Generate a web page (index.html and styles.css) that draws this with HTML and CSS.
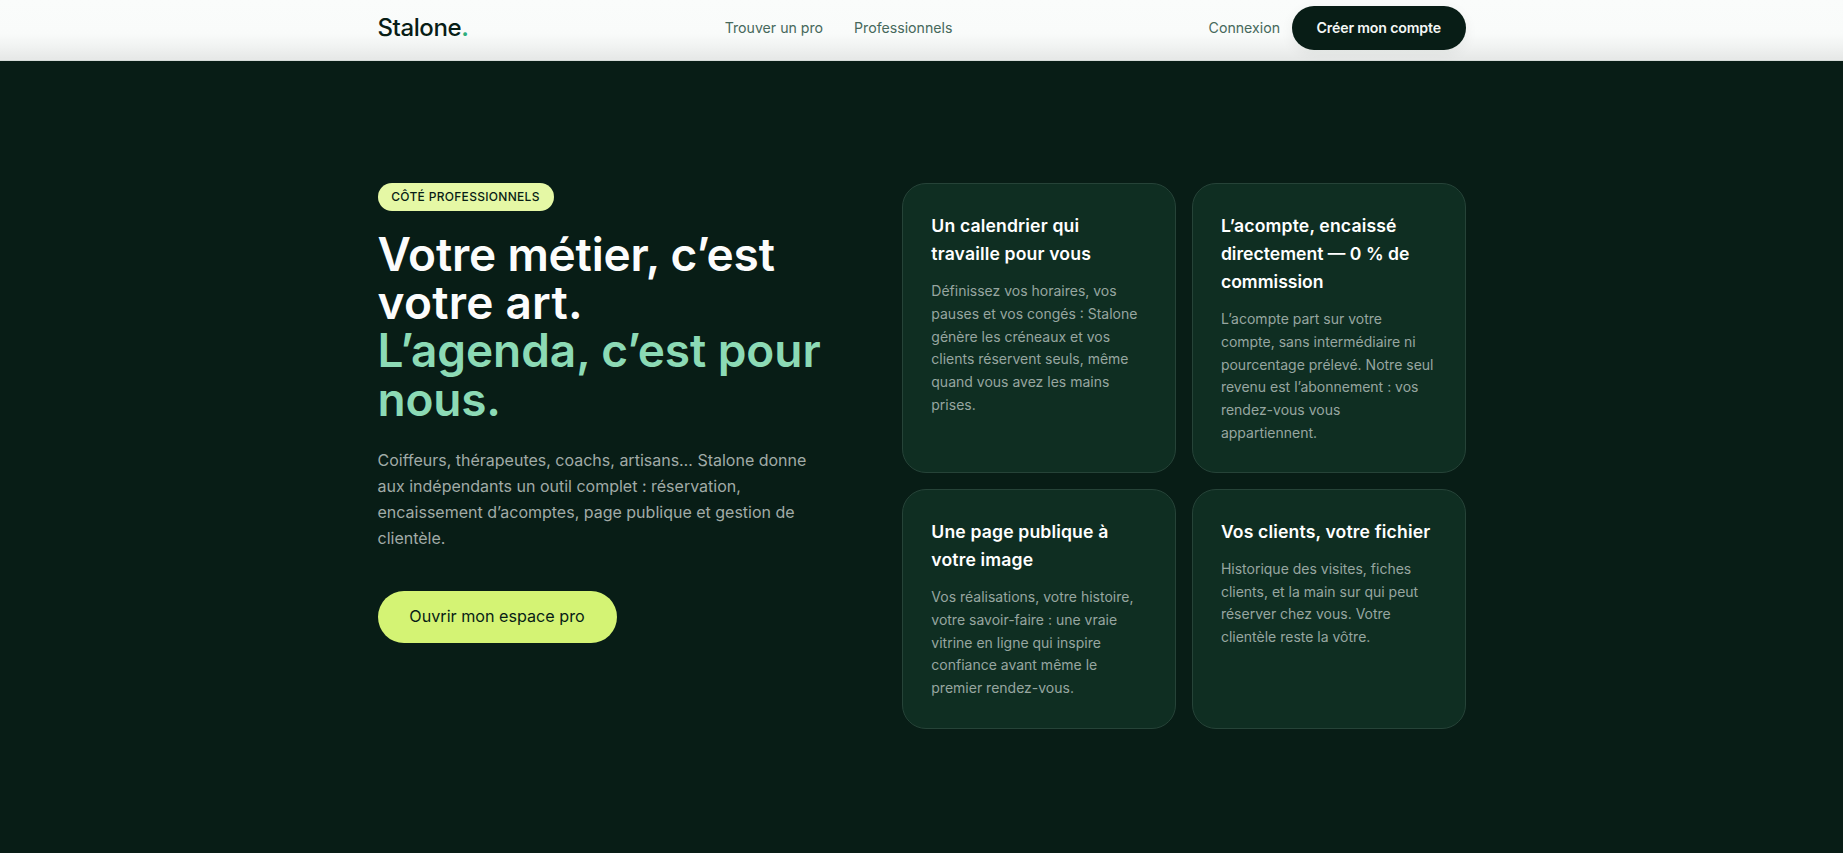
FILE: index.html
```
<!DOCTYPE html>
<html lang="fr">
<head>
    <meta charset="UTF-8">
    <meta name="viewport" content="width=device-width, initial-scale=1.0">
    <title>Stalone — Professionnels</title>
    <link rel="stylesheet" href="styles.css">
</head>
<body>

<header class="header">
    <div class="container nav">
        <a href="#" class="logo">Stalone<span>.</span></a>
        <nav class="nav-links">
            <a href="#">Trouver un pro</a>
            <a href="#pros">Professionnels</a>
        </nav>
        <div class="nav-actions">
            <a href="#" class="login">Connexion</a>
            <a href="#" class="btn btn-dark">Créer mon compte</a>
        </div>
    </div>
</header>

<section class="pros" id="pros">
    <div class="container pros-grid">
        <div class="pros-intro">
            <span class="badge">Côté professionnels</span>
            <h1>
                <span class="line l1">Votre métier, c’est</span>
                <span class="line l2">votre art.</span>
                <span class="line l3 accent">L’agenda, c’est pour</span>
                <span class="line l4 accent">nous.</span>
            </h1>
            <p class="lead">Coiffeurs, thérapeutes, coachs, artisans… Stalone donne aux indépendants un outil complet : réservation, encaissement d’acomptes, page publique et gestion de clientèle.</p>
            <a href="#" class="btn btn-lime">Ouvrir mon espace pro</a>
        </div>

        <div class="cards">
            <article class="card">
                <h3>Un calendrier qui travaille pour vous</h3>
                <p>Définissez vos horaires, vos pauses et vos congés : Stalone génère les créneaux et vos clients réservent seuls, même quand vous avez les mains prises.</p>
            </article>
            <article class="card">
                <h3>L’acompte, encaissé <span class="tight">directement — 0 % de commission</span></h3>
                <p>L’acompte part sur votre compte, sans intermédiaire ni pourcentage prélevé. Notre seul revenu est l’abonnement : vos rendez-vous vous appartiennent.</p>
            </article>
            <article class="card">
                <h3>Une page publique à votre image</h3>
                <p>Vos réalisations, votre histoire, votre savoir-faire : une vraie vitrine en ligne qui inspire confiance avant même le premier rendez-vous.</p>
            </article>
            <article class="card">
                <h3>Vos clients, votre fichier</h3>
                <p>Historique des visites, fiches clients, et la main sur qui peut réserver chez vous. Votre clientèle reste la vôtre.</p>
            </article>
        </div>
    </div>
</section>

</body>
</html>
```
FILE: styles.css
```
* {
    box-sizing: border-box;
    margin: 0;
    padding: 0;
}
body {
    font-family: Inter, sans-serif;
    font-size: 16px;
    line-height: 1.6;
    background: #081d16;
    color: #081d16;
    overflow: hidden;
}
a {
    color: inherit;
    text-decoration: none;
}
.container {
    width: 1088px;
    margin: 0 auto;
}

/* header */
.header {
    height: 61px;
    background: linear-gradient(#fafcfb 0, #f9fbfa 34px, #f1f3f2 46px, #e7e9e8 58px);
    border-bottom: 1px solid #d5dbd8;
}
.nav {
    display: flex;
    justify-content: space-between;
    align-items: center;
    height: 56px;
}
.logo {
    font-size: 24px;
    font-weight: 550;
    letter-spacing: -0.4px;
}
.logo span {
    color: #2fae7c;
    font-weight: 600;
}
.nav-links {
    display: flex;
    gap: 31px;
    font-size: 14.15px;
    color: #47695c;
}
.nav-actions {
    display: flex;
    align-items: center;
    gap: 12px;
    font-size: 14.15px;
}
.login {
    color: #47695c;
}
.btn {
    display: inline-flex;
    align-items: center;
    justify-content: center;
    border-radius: 999px;
}
.btn-dark {
    width: 173.5px;
    height: 44px;
    background: #081d16;
    color: #f4f7f5;
    font-weight: 600;
    letter-spacing: -0.15px;
    box-shadow: 0 4px 14px rgba(8, 29, 22, 0.06);
}

/* section pros */
.pros {
    padding: 122px 0;
}
.pros-grid {
    display: grid;
    grid-template-columns: 0.9fr 1.1fr;
    gap: 64px;
    align-items: start;
}
.badge {
    display: flex;
    align-items: center;
    justify-content: center;
    width: 176px;
    height: 28px;
    border-radius: 999px;
    background: #e5f8a5;
    font-size: 12px;
    font-weight: 550;
    letter-spacing: 0.3px;
    text-transform: uppercase;
}
h1 {
    margin-top: 19px;
    font-size: 46px;
    font-weight: 600;
    line-height: 48.2px;
    color: #fcfcfc;
}
.line {
    display: block;
    white-space: nowrap;
}
.l1 {
    letter-spacing: -0.2px;
}
.l2 {
    letter-spacing: 0.25px;
}
.l3 {
    letter-spacing: -0.06px;
}
.l4 {
    letter-spacing: -0.2px;
}
.accent {
    color: #8cdab5;
}
.lead {
    max-width: 440px;
    margin-top: 24px;
    font-size: 16px;
    line-height: 26px;
    color: #a1aba7;
}
.btn-lime {
    width: 239px;
    height: 52px;
    margin-top: 40px;
    padding-top: 1px;
    background: #d4f374;
    font-size: 16.15px;
}

/* cartes */
.cards {
    display: grid;
    grid-template-columns: 1fr 1fr;
    grid-template-rows: 290px 240px;
    gap: 16px;
}
.card {
    padding: 28px;
    background: #0f2e22;
    border: 1px solid #264338;
    border-radius: 24px;
}
.card h3 {
    margin-bottom: 12px;
    font-size: 17.6px;
    font-weight: 600;
    line-height: 28.16px;
    letter-spacing: 0.15px;
    color: #fff;
}
.card h3 .tight {
    letter-spacing: 0;
}
.card p {
    font-size: 14px;
    line-height: 22.65px;
    color: #97a6a0;
}
```
